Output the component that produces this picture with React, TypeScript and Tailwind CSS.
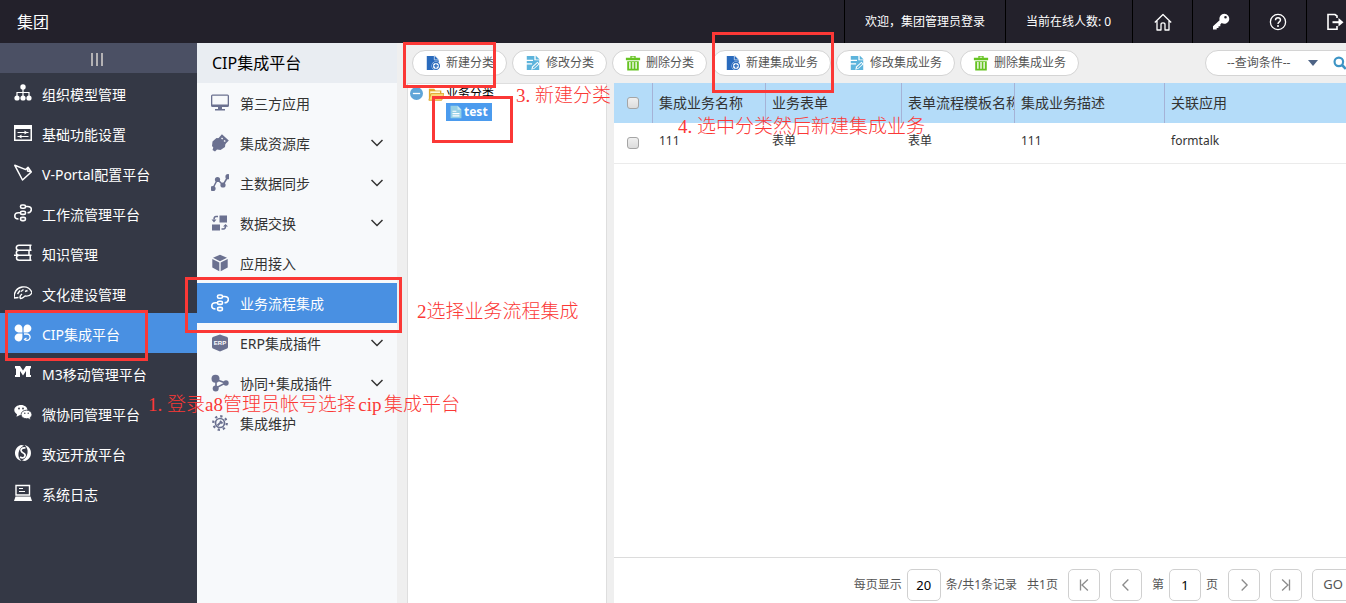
import type { ReactNode } from "react";

const glyphs: Record<string, ReactNode> = {
  org: (
    <>
      <circle cx="9" cy="3" r="2.7" fill="currentColor" />
      <path d="M9 5v7M3 13V8.500h12V13" fill="none" stroke="currentColor" strokeWidth="1.200" />
      <circle cx="3" cy="14" r="2.600" fill="currentColor" />
      <circle cx="9" cy="14" r="2.600" fill="currentColor" />
      <circle cx="15" cy="14" r="2.600" fill="currentColor" />
    </>
  ),
  settings: (
    <>
      <path d="M0 1h18v16H0zM1.500 5v10.500h15V5z" fill="currentColor" fillRule="evenodd" />
      <path d="M3.500 8.500h11M3.500 12.500h11" stroke="currentColor" strokeWidth="1.100" />
      <path d="M10.500 6.500v4l3-2zM7.500 10.500v4l-3-2z" fill="currentColor" />
    </>
  ),
  portal: (
    <path d="M.800 1.300 8.500 16 17.300 8 14 3.300 11.800 5.600zM14 3.500l-.500 3.500 3.500.700" fill="none" stroke="currentColor" strokeWidth="1.500" strokeLinejoin="round" />
  ),
  flow: (
    <g fill="none" stroke="currentColor" strokeWidth="1.600">
      <rect x="6.500" y="1" width="5" height="3.200" rx="1.500" />
      <rect x="6.500" y="7.200" width="5" height="3.200" rx="1.500" />
      <rect x="6.500" y="13.400" width="5" height="3.200" rx="1.500" />
      <path d="M12 2.500h1.500c2.700 0 4 1.300 3.800 3.300-.300 2-1.800 2.900-3.800 2.900M6 8.800H4.500C2 8.800.800 10 .800 12s1.400 3 3.700 3" />
    </g>
  ),
  books: (
    <g fill="none" stroke="currentColor" strokeWidth="1.500">
      <path d="M17.500 1.300H5C3 1.300 2.300 2.300 2.300 3.700S3 6.200 5 6.200h12.500M17.500 11.200H5c-2-.200-2.700-1.200-2.700-2.500S3 6.300 5 6.200M0 11.300h5M5 11.300c-1.700.200-2.500 1-2.500 2.400s1 2.500 2.700 2.500h12.300M16.200 1.300v5M15 6.200v5M16.200 11.200v5" />
    </g>
  ),
  culture: (
    <path d="M0 14C0 8 3 4 8 3c5-.800 8.500 2 10 5.500-1.500 3-4 4-7 3.500-1.500 1-2 2.500-4.500 2.500C5.500 13 6 11.500 8 10M0 14l4.500-.500M3.500 10 6 6.500M7 7.500l2.500-2M11 7.500l2.500-1" fill="none" stroke="currentColor" strokeWidth="1.400" strokeLinejoin="round" />
  ),
  clover: (
    <>
      <path d="M8.400 8.400H4.700A3.900 3.900 0 1 1 8.400 4.700zM9.600 8.400V4.700a3.900 3.900 0 1 1 3.700 3.700zM8.400 9.600v3.700a3.900 3.900 0 1 1-3.700-3.700z" fill="currentColor" />
      <path d="M10 10h3a3.200 3.200 0 1 1-2.500 5.300l2-1.300" fill="none" stroke="currentColor" strokeWidth="1.300" />
    </>
  ),
  mobile: (
    <path d="M1 2h5l3 4.500L12 2h5v2.500h-1V11h1v2h-5V7l-3 4.500L6 7v6H1v-2h1V4.500H1z" fill="currentColor" />
  ),
  chat: (
    <>
      <path d="M7 1c3.800 0 6.500 2.300 6.500 5.200s-2.700 5-6.500 5L6 11l-3.500 1.700L3 10.200C1.200 9.200.300 7.900.300 6.100.300 3.300 3.200 1 7 1z" fill="currentColor" />
      <path d="M12.500 6.200c3.200 0 5.400 2 5.400 4.300 0 1.300-.700 2.400-1.800 3.200l.400 2.100-2.500-1.200-1.500.100c-3.200 0-5.400-1.900-5.400-4.200s2.200-4.300 5.400-4.300z" fill="currentColor" stroke="#343845" strokeWidth=".8" />
      <circle cx="5" cy="4.500" r=".9" fill="#343845" />
      <circle cx="9" cy="4.500" r=".9" fill="#343845" />
      <circle cx="10.800" cy="9.300" r=".7" fill="#343845" />
      <circle cx="14.200" cy="9.300" r=".7" fill="#343845" />
    </>
  ),
  open: (
    <>
      <path d="M7 1C2 3 0 7 1.500 12c1 2.500 3 4.500 6 5-2.500-2-3.500-5-3-8S6.500 3 10 1.500zM11 17c5-2 7-6 5.500-11-1-2.500-3-4.500-6-5 2.500 2 3.500 5 3 8s-2 6-5.500 7.500z" fill="currentColor" />
      <path d="M11.500 4C8 3.500 6 5.500 7.500 7.500S12 9.500 11 12s-3.500 2-5 1" fill="none" stroke="currentColor" strokeWidth="1.700" />
    </>
  ),
  log: (
    <>
      <path d="M2 1.500h13.500v9.500H2z" fill="none" stroke="currentColor" strokeWidth="1.400" />
      <path d="M5 4.500h4M5 7.500h6" stroke="currentColor" strokeWidth="1.200" />
      <path d="M1.500 12.500h15L18 17H0z" fill="currentColor" />
    </>
  ),
  monitor: (
    <>
      <path d="M1.500.500h15A1.500 1.500 0 0 1 18 2v9.500a1.500 1.500 0 0 1-1.500 1.500h-15A1.500 1.500 0 0 1 0 11.500V2A1.500 1.500 0 0 1 1.500.500zM1.300 1.800v8.700h15.400V1.800z" fill="currentColor" fillRule="evenodd" />
      <path d="M7 13h4v2h3v1.500H4V15h3z" fill="currentColor" />
    </>
  ),
  resource: (
    <>
      <path d="M1.500 7.500 5.500 4l5 .500 4 4-.500 4.500-4.500 3-3.500-.500L4 17.500l-2.500-1.500.800-2.500L1 12z" fill="currentColor" />
      <path d="m7 6 4-4.500 5.500 5L12 11" fill="currentColor" stroke="currentColor" strokeWidth="1.800" />
      <path d="m10.500 4 1.200 1M13 6.500l1.300 1" stroke="#f7f9fb" strokeWidth="1.500" />
    </>
  ),
  nodes: (
    <>
      <path d="M1.500 15 6.500 5.500 12 11l5-8.500" fill="none" stroke="currentColor" strokeWidth="1.500" />
      <circle cx="2" cy="14.500" r="2.600" fill="currentColor" />
      <circle cx="6.500" cy="5.500" r="2.600" fill="currentColor" />
      <circle cx="12" cy="11" r="2.600" fill="currentColor" />
      <circle cx="17" cy="2.700" r="2.600" fill="currentColor" />
    </>
  ),
  exchange: (
    <>
      <path d="M8.500 1.500h7.500v7H8.500zM1 10.500h8v6H1z" fill="currentColor" />
      <path d="M7 2.500H5c-1.500 0-2 1-2 3M10.500 15H12.500c1.500 0 2-1 2-3" fill="none" stroke="currentColor" strokeWidth="1.500" />
      <path d="M.500 5.500h5L3 8.500zM12 12.500h5L14.500 10z" fill="currentColor" />
    </>
  ),
  cube: (
    <path d="m9 .800 7 3-7 3.500-7-3.500zM1.300 5 8.300 8.500v8.700l-7-3.700zM16.700 5 9.700 8.500v8.700l7-3.700z" fill="currentColor" />
  ),
  erp: (
    <>
      <path d="M9 .500c2 .800 4.500 1.500 6.500 2.200 1 .400 1.500 1 1.500 2v8c0 1-.500 1.600-1.500 2L9 17.500l-6.500-2.800c-1-.400-1.500-1-1.500-2v-8c0-1 .500-1.600 1.500-2z" fill="currentColor" />
      <text x="9" y="11" textAnchor="middle" fill="#fff" className="font-['Liberation_Sans'] text-[6px] font-bold">ERP</text>
    </>
  ),
  molecule: (
    <>
      <path d="M5 5.500 14.500 9 5 14z" fill="none" stroke="currentColor" strokeWidth="1.600" />
      <circle cx="4.500" cy="4.800" r="4" fill="currentColor" />
      <circle cx="4.700" cy="14.500" r="3" fill="currentColor" />
      <circle cx="15" cy="9" r="2.700" fill="currentColor" />
    </>
  ),
  gear: (
    <>
      <circle cx="9" cy="9" r="4.500" fill="none" stroke="currentColor" strokeWidth="1.700" />
      <circle cx="9" cy="9" r="6.800" fill="none" stroke="currentColor" strokeWidth="2.200" strokeDasharray="2.300 3.040" />
      <path d="m6.500 11.500 3-3M9 7l2.500 2.500" stroke="currentColor" strokeWidth="1.800" />
    </>
  ),
  home: (
    <path d="M.800 9.500 9 1.500l8.200 8M3 8v9h4v-5.500c0-1 .800-1.700 2-1.700s2 .700 2 1.700V17h4V8" fill="none" stroke="currentColor" strokeWidth="1.300" strokeLinejoin="round" />
  ),
  key: (
    <path d="M12.300.800a5 5 0 1 1-2.600 9.300L8.300 11.500v1.700H6.500V15H4.700v1.500H1v-3.200l6.600-6.100A5 5 0 0 1 12.300.800zM13.500 3a1.300 1.300 0 1 0 0 2.600 1.300 1.300 0 0 0 0-2.600z" fill="currentColor" fillRule="evenodd" />
  ),
  help: (
    <>
      <circle cx="9" cy="9" r="7.600" fill="none" stroke="currentColor" strokeWidth="1.300" />
      <path d="M6.500 7.300C6.500 5.700 7.500 4.800 9 4.800s2.500.900 2.500 2.200c0 1.800-2.500 2-2.500 4" fill="none" stroke="currentColor" strokeWidth="1.400" />
      <circle cx="9" cy="13" r="1" fill="currentColor" />
    </>
  ),
  exit: (
    <>
      <path d="M11 5V3L9 1.500H2v14.800h9V13" fill="none" stroke="currentColor" strokeWidth="1.600" />
      <path d="M6.500 9.200H14" stroke="currentColor" strokeWidth="2" />
      <path d="m12.500 5 5 4.200-5 4.200z" fill="currentColor" />
    </>
  ),
  create: (
    <>
      <path d="M2 1h8l5.500 5v6H11v5H2z" fill="#2a6bbd" />
      <path d="M10.500 0 16 5.500h-5.500z" fill="#2a6bbd" stroke="#fff" strokeWidth=".7" />
      <circle cx="12.300" cy="12.300" r="4.900" fill="#fff" />
      <circle cx="12.300" cy="12.300" r="4" fill="#fff" stroke="#2a6bbd" strokeWidth="1.300" />
      <path d="M12.300 9.800v5M9.800 12.300h5" stroke="#2a6bbd" strokeWidth="1.500" />
    </>
  ),
  edit: (
    <>
      <path d="M2 1h8.500v5H16v11H2z" fill="#5db4dc" />
      <path d="M12 .500 16.500 5H12z" fill="#5db4dc" />
      <path d="M1 6h8M1 10h7" stroke="#fff" strokeWidth="1.400" />
      <path d="m7 16.500 1-3.500 6-5.500 2.500 2.500-6 5.500z" fill="#fff" />
      <path d="m8.500 15.500.700-2L14 9l1 1-4.700 4.700z" fill="#5db4dc" />
    </>
  ),
  trash: (
    <>
      <path d="M6 1h6v2h5v3H1V3h5zM2.500 7h13v10.500h-13z" fill="#66c322" />
      <path d="M5.500 8v7.500M9 8v7.500M12.500 8v7.500" stroke="#fff" strokeWidth="1.500" />
      <path d="M7.500 2.500h3" stroke="#fff" strokeWidth="1" />
    </>
  ),
  folder: (
    <>
      <path d="M1 3h6l1.500 2H15v11H1z" fill="#e3a92c" />
      <path d="M2.500 6h11v2.500h-11z" fill="#fff8da" />
      <path d="M3.500 8.500H18L15.500 16H1z" fill="#fbd977" stroke="#dca126" strokeWidth=".9" />
    </>
  ),
  page: (
    <>
      <path d="M2 1h9l5 5v11H2z" fill="#94cfe6" />
      <path d="M11 1v5h5z" fill="#c6e8f3" />
      <path d="M4.500 8h5M4.500 11h9M4.500 14h9" stroke="#fff" strokeWidth="1.500" />
    </>
  ),
  collapse: (
    <>
      <circle cx="9" cy="9" r="9" fill="#5fa5d8" />
      <path d="M4 9h10" stroke="#fff" strokeWidth="1.800" />
    </>
  ),
  search: (
    <>
      <circle cx="7.500" cy="7.500" r="5.500" fill="none" stroke="#3d94c5" strokeWidth="2.800" />
      <path d="m11.500 11.500 5 5" stroke="#3d94c5" strokeWidth="3.400" />
    </>
  ),
  first: <path d="M4.500 2v14M14 2 6.500 9l7.500 7" fill="none" stroke="currentColor" strokeWidth="1.700" />,
  prev: <path d="m12 2-7 7 7 7" fill="none" stroke="currentColor" strokeWidth="1.700" />,
  next: <path d="m6 2 7 7-7 7" fill="none" stroke="currentColor" strokeWidth="1.700" />,
  last: <path d="M13.500 2v14M4 2l7.500 7L4 16" fill="none" stroke="currentColor" strokeWidth="1.700" />,
};

function Icon({ name, className = "size-[18px]" }: { name: string; className?: string }) {
  return (
    <svg viewBox="0 0 18 18" className={`shrink-0 ${className}`} aria-hidden="true">
      {glyphs[name]}
    </svg>
  );
}

function Chevron() {
  return (
    <svg viewBox="0 0 12 8" className="ml-auto h-2 w-3" aria-hidden="true">
      <path d="m.500 1 5.500 5.500L11.500 1" fill="none" stroke="#333" strokeWidth="1.500" />
    </svg>
  );
}

const modules = [
  ["org", "组织模型管理"],
  ["settings", "基础功能设置"],
  ["portal", "V-Portal配置平台"],
  ["flow", "工作流管理平台"],
  ["books", "知识管理"],
  ["culture", "文化建设管理"],
  ["clover", "CIP集成平台"],
  ["mobile", "M3移动管理平台"],
  ["chat", "微协同管理平台"],
  ["open", "致远开放平台"],
  ["log", "系统日志"],
];

const submenu: { icon: string; label: string; expandable?: boolean }[] = [
  { icon: "monitor", label: "第三方应用" },
  { icon: "resource", label: "集成资源库", expandable: true },
  { icon: "nodes", label: "主数据同步", expandable: true },
  { icon: "exchange", label: "数据交换", expandable: true },
  { icon: "cube", label: "应用接入" },
  { icon: "flow", label: "业务流程集成" },
  { icon: "erp", label: "ERP集成插件", expandable: true },
  { icon: "molecule", label: "协同+集成插件", expandable: true },
  { icon: "gear", label: "集成维护" },
];

const actions = [
  ["create", "新建分类"],
  ["edit", "修改分类"],
  ["trash", "删除分类"],
  ["create", "新建集成业务"],
  ["edit", "修改集成业务"],
  ["trash", "删除集成业务"],
];

const columns = ["集成业务名称", "业务表单", "表单流程模板名称", "集成业务描述", "关联应用"];
const row = ["111", "表单", "表单", "111", "formtalk"];

const checkbox =
  "block size-3 appearance-none rounded-[3px] border border-[#a5a5a5] bg-linear-to-b from-[#f0f0f0] to-[#dcdcdc] checked:bg-[#4990e2]";
const pagerBox = "h-8 w-8 shrink-0 rounded-[5px] border border-[#d0d0d0] bg-white";

function PagerButton({ icon, label }: { icon: string; label: string }) {
  return (
    <button type="button" aria-label={label} className={`${pagerBox} flex items-center justify-center text-[#8c8c8c]`}>
      <Icon name={icon} className="size-3.5" />
    </button>
  );
}

function Header() {
  return (
    <header className="flex h-[43px] shrink-0 items-stretch bg-[#23212b] text-white">
      <h1 className="flex items-center pl-[17px] text-base">集团</h1>
      <div className="ml-auto flex text-xs">
        <span className="flex items-center border-l border-black px-5">欢迎，集团管理员登录</span>
        <span className="flex w-[127px] items-center border-l border-black px-5 whitespace-nowrap">当前在线人数: 0</span>
        <a href="#home" aria-label="首页" className="flex w-[60px] items-center justify-center border-l border-black">
          <Icon name="home" />
        </a>
        <a href="#password" aria-label="密码" className="flex w-[57px] items-center justify-center border-l border-black">
          <Icon name="key" />
        </a>
        <a href="#help" aria-label="帮助" className="flex w-[57px] items-center justify-center border-l border-black">
          <Icon name="help" />
        </a>
        <a href="#exit" aria-label="退出" className="flex w-10 items-center justify-end border-l border-black pr-0.5">
          <Icon name="exit" />
        </a>
      </div>
    </header>
  );
}

function Sidebar() {
  return (
    <nav className="w-[197px] shrink-0 bg-[#343845] text-sm text-white">
      <button type="button" aria-label="收起菜单" className="flex h-[30px] w-full items-center justify-center gap-[3px] bg-[#4b5064] pt-0.5 pr-1">
        <span className="h-[13px] w-0.5 bg-[#b4b2b4]" />
        <span className="h-[13px] w-0.5 bg-[#b4b2b4]" />
        <span className="h-[13px] w-0.5 bg-[#b4b2b4]" />
      </button>
      {modules.map(([icon, label]) => (
        <a
          key={label}
          href={`#${icon}`}
          className={`flex h-10 items-center gap-2.5 pl-3.5 ${icon === "clover" ? "bg-[#4990e2]" : ""}`}
        >
          <Icon name={icon} />
          <span className="pt-1">{label}</span>
        </a>
      ))}
    </nav>
  );
}

function Submenu() {
  return (
    <nav className="w-[200px] shrink-0 bg-[#f7f9fb] text-sm text-[#333]">
      <h2 className="flex h-10 items-center bg-[#e9edf2] pl-[15px] text-base text-black">CIP集成平台</h2>
      {submenu.map(({ icon, label, expandable }) => {
        const active = label === "业务流程集成";
        return (
          <a
            key={label}
            href={`#${icon}`}
            className={`flex h-10 items-center gap-[11px] pr-3.5 pl-3.5 ${active ? "bg-[#4990e2] text-white" : ""}`}
          >
            <span className={`flex ${active ? "text-white" : "text-[#6b7190]"}`}>
              <Icon name={icon} />
            </span>
            <span className="pt-0.5">{label}</span>
            {expandable && <Chevron />}
          </a>
        );
      })}
    </nav>
  );
}

function Toolbar() {
  return (
    <div className="flex h-10 shrink-0 items-center gap-[5px] pl-[5px] text-xs text-[#555]">
      {actions.map(([icon, label]) => (
        <button
          key={label}
          type="button"
          className="flex h-[26px] shrink-0 items-center gap-[5px] rounded-full border border-[#d4d4d4] bg-white pr-3 pl-3 whitespace-nowrap"
        >
          <Icon name={icon} className="size-4" />
          {label}
        </button>
      ))}
      <div className="-mr-4 ml-auto flex h-[26px] shrink-0 items-center rounded-full border border-[#d4d4d4] bg-white pr-3.5 pl-[21px]">
        <select aria-label="查询条件" className="w-[81px] appearance-none bg-transparent outline-none">
          <option>--查询条件--</option>
        </select>
        <svg viewBox="0 0 10 6" className="h-1.5 w-2.5" aria-hidden="true">
          <path d="M0 0h10L5 6z" fill="#4d6385" />
        </svg>
        <button type="button" aria-label="查询" className="ml-[15px]">
          <Icon name="search" className="size-3.5" />
        </button>
      </div>
    </div>
  );
}

function CategoryTree() {
  return (
    <div className="w-[200px] shrink-0 border border-b-0 border-[#dedede] bg-white text-xs text-black">
      <div className="flex h-[19px] items-center pl-0.5">
        <button type="button" aria-label="收起">
          <Icon name="collapse" className="size-[13px]" />
        </button>
        <span className="ml-[5px] flex items-center gap-0.5">
          <Icon name="folder" className="size-4" />
          业务分类
        </span>
      </div>
      <a href="#test" className="ml-[38px] flex h-[18px] w-fit items-center gap-px bg-[#4b9bee] pr-1 pl-[3px] text-xs font-bold text-white">
        <Icon name="page" className="size-3.5" />
        test
      </a>
    </div>
  );
}

function RecordTable() {
  return (
    <table className="w-full table-fixed border-separate border-spacing-0 text-left text-[#333]">
      <colgroup>
        <col className="w-[39px]" />
        <col className="w-[113px]" />
        <col className="w-[136px]" />
        <col className="w-[113px]" />
        <col className="w-[150px]" />
        <col />
      </colgroup>
      <thead>
        <tr className="h-10 bg-[#b4dcf9] text-sm">
          <th className="border-r border-[#a5b2d6] pl-[13px]">
            <input type="checkbox" aria-label="全选" className={checkbox} />
          </th>
          {columns.map((label) => (
            <th key={label} className="overflow-hidden border-r border-[#a5b2d6] pl-1.5 font-normal whitespace-nowrap last:border-r-0">
              {label}
            </th>
          ))}
        </tr>
      </thead>
      <tbody>
        <tr className="h-[41px] text-xs">
          <td className="border-b border-[#ebebeb] pl-[13px]">
            <input type="checkbox" aria-label="选择 111" className={checkbox} />
          </td>
          {row.map((value, i) => (
            <td key={columns[i]} className="border-b border-[#ebebeb] pb-1 pl-1.5">
              {value}
            </td>
          ))}
        </tr>
      </tbody>
    </table>
  );
}

function Pager() {
  return (
    <div className="mt-auto flex h-[46px] shrink-0 items-start justify-end border-t border-[#dcdcdc] pt-[11px] text-xs text-[#555]">
      <div className="-mr-2 flex items-center gap-2.5 whitespace-nowrap">
        <label className="flex items-center gap-[5px]">
          每页显示
          <input defaultValue="20" className={`${pagerBox} w-[34px] text-center text-[13px] text-black`} />
          条/共1条记录
        </label>
        <span>共1页</span>
        <PagerButton icon="first" label="首页" />
        <PagerButton icon="prev" label="上一页" />
        <label className="flex items-center gap-[5px]">
          第
          <input defaultValue="1" className={`${pagerBox} text-center text-[13px] text-black`} />
          页
        </label>
        <PagerButton icon="next" label="下一页" />
        <PagerButton icon="last" label="末页" />
        <button type="button" className="h-8 w-[42px] rounded-[5px] border border-[#d0d0d0] bg-white text-[13px]">
          GO
        </button>
      </div>
    </div>
  );
}

const frame = "absolute border-[3px] border-[#fb3836]";
const note = "absolute whitespace-nowrap";

function Annotations() {
  return (
    <div className="pointer-events-none absolute inset-0 overflow-hidden font-['Liberation_Serif','Noto_Sans_CJK_SC',serif] text-[19px] leading-6 font-light text-[#fb3836]">
      <div className={`${frame} top-[310px] left-[5px] h-[51px] w-[143px]`} />
      <div className={`${frame} top-[277px] left-[185px] h-14 w-[217px]`} />
      <div className={`${frame} top-[42px] left-[403px] h-[46px] w-[93px]`} />
      <div className={`${frame} top-24 left-[432px] h-[47px] w-[81px]`} />
      <div className={`${frame} top-8 left-[712px] h-[61px] w-[122px]`} />
      <p className={`${note} top-[393px] left-[148px]`}>
        <span className="inline-block w-[19px]">1.</span>登录a8管理员帐号选择
        <span className="inline-block w-7 text-center">cip</span>集成平台
      </p>
      <p className={`${note} top-[300px] left-[417px]`}>2选择业务流程集成</p>
      <p className={`${note} top-[84px] left-[516px]`}>
        <span className="inline-block w-[19px]">3.</span>新建分类
      </p>
      <p className={`${note} top-[115px] left-[678px]`}>
        <span className="inline-block w-[19px]">4.</span>选中分类然后新建集成业务
      </p>
    </div>
  );
}

export default function App() {
  return (
    <div className="relative flex h-screen flex-col overflow-hidden bg-[#efefef] font-['Noto_Sans','Noto_Sans_CJK_SC',sans-serif]">
      <Header />
      <div className="flex min-h-0 flex-1">
        <Sidebar />
        <Submenu />
        <main className="flex min-w-0 flex-1 flex-col pl-2.5">
          <Toolbar />
          <div className="flex min-h-0 flex-1 gap-[7px]">
            <CategoryTree />
            <section className="flex min-w-0 flex-1 flex-col bg-white">
              <RecordTable />
              <Pager />
            </section>
          </div>
        </main>
      </div>
      <Annotations />
    </div>
  );
}
